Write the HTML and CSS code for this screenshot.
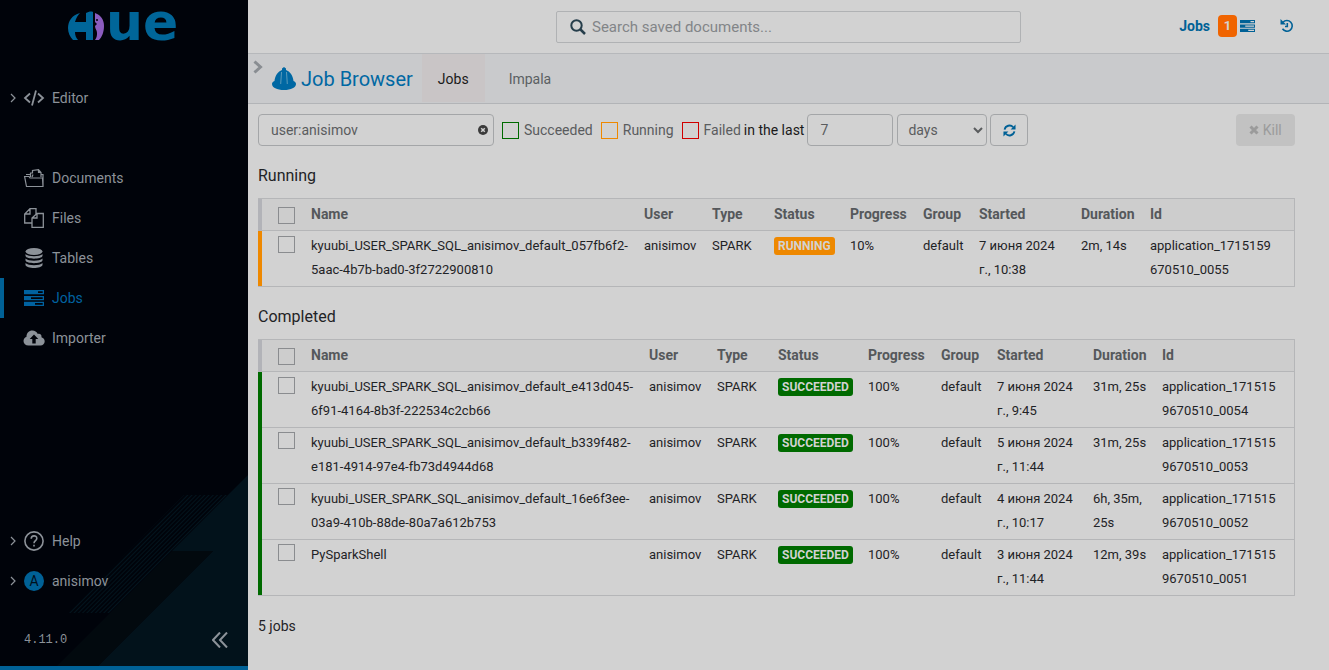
FILE: index.html
```html
<!DOCTYPE html>
<html lang="en">

<head>
    <meta charset="UTF-8">
    <meta name="viewport" content="width=device-width, initial-scale=1.0">
    <title>Hue - Job Browser</title>
    <link rel="stylesheet" href="styles.css">
</head>

<body>
    <!-- shared icons -->
    <svg class="defs" width="0" height="0">
        <symbol id="i-chevron" viewBox="0 0 8 10"><path d="M2 1l4 4-4 4" fill="none" stroke="currentColor" stroke-width="1.2"/></symbol>
        <symbol id="i-jobs" viewBox="0 0 20 16">
            <path fill="currentColor" fill-rule="evenodd" d="M0 0h20v4.300H0zM14 1.300v1.700h4.700V1.300zM0 5.900h20v4.300H0zM7 7.200v1.700h11.700V7.200zM0 11.700h20V16H0zM11 13v1.700h7.700V13z"/>
        </symbol>
    </svg>

    <aside class="sidebar">
        <svg class="sidebar-bg" viewBox="0 0 248 196" width="248" height="196">
            <defs>
                <pattern id="stripes" width="3" height="3" patternUnits="userSpaceOnUse" patternTransform="rotate(45)">
                    <rect width="1" height="3" fill="#03141d"/>
                </pattern>
            </defs>
            <path d="M248 5L172 81h41L98 196h150z" fill="#02121b"/>
            <path d="M172 81h41L98 196H57z" fill="#02090e"/>
            <path d="M184 25h44L110 143H67z" fill="url(#stripes)"/>
        </svg>

        <a class="logo" href="#">
            <svg viewBox="0 0 38 30" width="38" height="30">
                <path fill="#006699" d="M12 2C4 4 0 10 0 17c0 5 2 9 5 12h5c-2-2-3-5-3-8h11v8h7V1c-2-1-5 0-7 1v9H7c1-4 3-7 5-9z"/>
                <path fill="#8b5cbf" d="M27 2c6 2 9 7 9 13 0 6-2 11-5 14h-4c2-3 2-5 2-7 0-3-2-4-2-7l2-2-2-2z"/>
                <circle cx="29" cy="9" r="1" fill="#00030a"/>
            </svg>
            <span>ue</span>
        </a>

        <nav class="menu">
            <a class="item editor" href="#">
                <svg class="chevron"><use href="#i-chevron"/></svg>
                <svg class="icon" viewBox="0 0 20 20"><path d="M6 5.500L1 10l5 4.500M14 5.500l5 4.500-5 4.500M12 2.500L8 17.500" fill="none" stroke="currentColor" stroke-width="1.800"/></svg>
                Editor
            </a>
            <a class="item" href="#">
                <svg class="icon" viewBox="0 0 20 20"><path d="M2.500 18.500L.6 8.500h4.400l1 1.500h12.500l.5 8.500zM19 18.500V6.500h-2M6.500 9V5h2V2.500l6-.8L17 4.500V9M9 6.500L8 9M14.500 1.700v2.800H17M2 6.500h4.500" fill="none" stroke="currentColor" stroke-width="1.200"/></svg>
                Documents
            </a>
            <a class="item" href="#">
                <svg class="icon" viewBox="0 0 20 20"><path d="M7.500 15H.7V6L6 .7h6V6M6 .7V6H.7M8 19.300V10l5-4.500h6.300v13.800zM13 5.500V10H8" fill="none" stroke="currentColor" stroke-width="1.300"/></svg>
                Files
            </a>
            <a class="item" href="#">
                <svg class="icon" viewBox="0 0 20 20"><g fill="currentColor"><ellipse cx="10" cy="3.500" rx="8.500" ry="3.500"/><path d="M1.500 6c3 3 14 3 17 0v2c-1 3.500-16 3.500-17 0zM1.500 10.500c3 3 14 3 17 0v2c-1 3.500-16 3.500-17 0zM1.500 15c3 3 14 3 17 0v2c-1 4-16 4-17 0z"/></g></svg>
                Tables
            </a>
            <a class="item active" href="#">
                <svg class="icon" viewBox="0 0 20 16"><use href="#i-jobs"/></svg>
                Jobs
            </a>
            <a class="item" href="#">
                <svg class="icon" viewBox="0 0 20 20"><path fill="currentColor" fill-rule="evenodd" d="M4.500 17.500C1.500 17.500-.5 15.500-.5 13c0-2 1-3.500 3-4.300C2.500 5 5 2.500 8.300 2.500c2.500 0 4.500 1.300 5.500 3.500 2-.8 4.200.8 3.700 3.200 2 .6 3.200 2.200 3.200 4.100 0 2.400-1.900 4.200-4.200 4.200zM10 6.500L5.700 11h2.600v4.500h3.400V11h2.600z"/></svg>
                Importer
            </a>
        </nav>

        <div class="menu-bottom">
            <a class="item" href="#">
                <svg class="chevron"><use href="#i-chevron"/></svg>
                <svg class="icon" viewBox="0 0 20 20"><circle cx="10" cy="10" r="9.100" fill="none" stroke="currentColor" stroke-width="1.600"/><path d="M7.200 7.800c0-3.800 5.600-3.800 5.600-.4 0 2-2.800 2.400-2.800 4.800M10 13.700v1.800" fill="none" stroke="currentColor" stroke-width="1.600"/></svg>
                Help
            </a>
            <a class="item" href="#">
                <svg class="chevron"><use href="#i-chevron"/></svg>
                <span class="avatar">A</span>
                anisimov
            </a>
        </div>
        <div class="sidebar-footer">
            <span>4.11.0</span>
            <button type="button" aria-label="Collapse">
                <svg viewBox="0 0 16 16" width="16" height="16"><path d="M8 .5L1 8l7 7.500M15 .5L8 8l7 7.500" fill="none" stroke="currentColor" stroke-width="2"/></svg>
            </button>
        </div>
    </aside>

    <div class="page">
        <header class="topbar">
            <label class="search">
                <svg viewBox="0 0 16 16" width="16" height="16"><circle cx="6.500" cy="6.500" r="5.200" fill="none" stroke="currentColor" stroke-width="2"/><path d="M10.500 10.500l4.500 4.500" stroke="currentColor" stroke-width="2.500"/></svg>
                <input type="text" placeholder="Search saved documents..." aria-label="Search saved documents">
            </label>
            <div class="top-links">
                <a href="#">Jobs <span class="count">1</span><svg viewBox="0 0 20 16" width="15" height="12"><use href="#i-jobs"/></svg></a>
                <a class="history" href="#" aria-label="History"><svg viewBox="0 0 14 14" width="14" height="14"><path d="M3 3.300a5.300 5.300 0 1 1-.5 6.500M7.300 4v3.500H5" fill="none" stroke="currentColor" stroke-width="1.600"/><path d="M.5 0v5.500H6z" fill="currentColor"/></svg></a>
            </div>
        </header>

        <div class="titlebar">
            <button class="expand" type="button" aria-label="Show assist"><svg viewBox="0 0 10 14" width="10" height="14"><path d="M1.500 1.500L7.500 7l-6 5.500" fill="none" stroke="currentColor" stroke-width="3"/></svg></button>
            <h1>
                <svg viewBox="0 0 24 24" width="24" height="24"><path fill="currentColor" d="M10 1.500l2-1.500 2 1.500V3c4 1.500 7 5.500 7.500 11 1.500.5 2.500 1.500 2.500 3 0 3.500-5 6-12 6S0 20.500 0 17c0-1.500 1-2.500 2.500-3C3 8.500 6 4.500 10 3z"/><path d="M9.500 5l-.8 12M14.500 5l.8 12" stroke="#5b9bbb" stroke-width="1" fill="none"/></svg>
                Job Browser
            </h1>
            <nav class="tabs">
                <a class="current" href="#">Jobs</a>
                <a href="#">Impala</a>
            </nav>
        </div>

        <main>
            <form class="filters">
                <div class="query">
                    <input type="text" value="user:anisimov" aria-label="Filter">
                    <button type="button" aria-label="Clear"><svg viewBox="0 0 10 10" width="10" height="10"><circle cx="5" cy="5" r="5" fill="currentColor"/><path d="M3.200 3.200l3.600 3.600M6.800 3.200L3.200 6.800" stroke="#d2d2d2" stroke-width="1.500"/></svg></button>
                </div>
                <label><input class="green" type="checkbox">Succeeded</label>
                <label><input class="orange" type="checkbox">Running</label>
                <label><input class="red" type="checkbox">Failed</label>
                <label class="last" for="amount">in the last</label>
                <input class="amount" id="amount" type="text" value="7">
                <select aria-label="Time unit">
                    <option>days</option>
                    <option>hours</option>
                    <option>minutes</option>
                </select>
                <button class="refresh" type="button" aria-label="Refresh"><svg viewBox="0 0 14 14" width="13" height="13"><path d="M1.700 6A5.400 5.400 0 0 1 11 3.500M12.300 8A5.400 5.400 0 0 1 3 10.500" fill="none" stroke="currentColor" stroke-width="2"/><path d="M13.500.5v5.300H8.200zM.5 13.500V8.200h5.300z" fill="currentColor"/></svg></button>
                <button class="kill" type="button" disabled><svg viewBox="0 0 10 10" width="10" height="10"><path d="M1.500 1.500l7 7M8.500 1.500l-7 7" stroke="currentColor" stroke-width="3"/></svg> Kill</button>
            </form>

            <h2>Running</h2>
            <table class="running">
                <colgroup>
                    <col class="c-check"><col><col class="c-user"><col class="c-type"><col class="c-status"><col class="c-progress"><col class="c-group"><col class="c-started"><col class="c-duration"><col class="c-id">
                </colgroup>
                <thead>
                    <tr>
                        <th><input type="checkbox" aria-label="Select all running"></th>
                        <th>Name</th>
                        <th>User</th>
                        <th>Type</th>
                        <th>Status</th>
                        <th>Progress</th>
                        <th>Group</th>
                        <th>Started</th>
                        <th>Duration</th>
                        <th>Id</th>
                    </tr>
                </thead>
                <tbody>
                    <tr>
                        <td><input type="checkbox" aria-label="Select job"></td>
                        <td>kyuubi_USER_SPARK_SQL_anisimov_default_057fb6f2-5aac-4b7b-bad0-3f2722900810</td>
                        <td>anisimov</td>
                        <td>SPARK</td>
                        <td><span class="status">RUNNING</span></td>
                        <td>10%</td>
                        <td>default</td>
                        <td>7 июня 2024 г., 10:38</td>
                        <td>2m, 14s</td>
                        <td>application_1715159670510_0055</td>
                    </tr>
                </tbody>
            </table>

            <h2>Completed</h2>
            <table class="completed">
                <colgroup>
                    <col class="c-check"><col><col class="c-user"><col class="c-type"><col class="c-status"><col class="c-progress"><col class="c-group"><col class="c-started"><col class="c-duration"><col class="c-id">
                </colgroup>
                <thead>
                    <tr>
                        <th><input type="checkbox" aria-label="Select all completed"></th>
                        <th>Name</th>
                        <th>User</th>
                        <th>Type</th>
                        <th>Status</th>
                        <th>Progress</th>
                        <th>Group</th>
                        <th>Started</th>
                        <th>Duration</th>
                        <th>Id</th>
                    </tr>
                </thead>
                <tbody>
                    <tr>
                        <td><input type="checkbox" aria-label="Select job"></td>
                        <td>kyuubi_USER_SPARK_SQL_anisimov_default_e413d045-6f91-4164-8b3f-222534c2cb66</td>
                        <td>anisimov</td>
                        <td>SPARK</td>
                        <td><span class="status">SUCCEEDED</span></td>
                        <td>100%</td>
                        <td>default</td>
                        <td>7 июня 2024 г., 9:45</td>
                        <td>31m, 25s</td>
                        <td>application_1715159670510_0054</td>
                    </tr>
                    <tr>
                        <td><input type="checkbox" aria-label="Select job"></td>
                        <td>kyuubi_USER_SPARK_SQL_anisimov_default_b339f482-e181-4914-97e4-fb73d4944d68</td>
                        <td>anisimov</td>
                        <td>SPARK</td>
                        <td><span class="status">SUCCEEDED</span></td>
                        <td>100%</td>
                        <td>default</td>
                        <td>5 июня 2024 г., 11:44</td>
                        <td>31m, 25s</td>
                        <td>application_1715159670510_0053</td>
                    </tr>
                    <tr>
                        <td><input type="checkbox" aria-label="Select job"></td>
                        <td>kyuubi_USER_SPARK_SQL_anisimov_default_16e6f3ee-03a9-410b-88de-80a7a612b753</td>
                        <td>anisimov</td>
                        <td>SPARK</td>
                        <td><span class="status">SUCCEEDED</span></td>
                        <td>100%</td>
                        <td>default</td>
                        <td>4 июня 2024 г., 10:17</td>
                        <td>6h, 35m, 25s</td>
                        <td>application_1715159670510_0052</td>
                    </tr>
                    <tr>
                        <td><input type="checkbox" aria-label="Select job"></td>
                        <td>PySparkShell</td>
                        <td>anisimov</td>
                        <td>SPARK</td>
                        <td><span class="status">SUCCEEDED</span></td>
                        <td>100%</td>
                        <td>default</td>
                        <td>3 июня 2024 г., 11:44</td>
                        <td>12m, 39s</td>
                        <td>application_1715159670510_0051</td>
                    </tr>
                </tbody>
            </table>
            <p class="total">5 jobs</p>
        </main>
    </div>
</body>

</html>
```
FILE: styles.css
```css
* {
    box-sizing: border-box;
}

body {
    margin: 0;
    display: flex;
    min-height: 100vh;
    background: #d2d2d2;
    color: #1f2326;
    font-family: Roboto, "Liberation Sans", sans-serif;
    font-size: 14px;
    line-height: 20px;
}

a {
    text-decoration: none;
}

button,
input,
select {
    font: inherit;
    color: inherit;
    margin: 0;
}

svg {
    flex-shrink: 0;
}

.defs {
    position: absolute;
}

/* sidebar */
.sidebar {
    position: relative;
    display: flex;
    flex-direction: column;
    flex: 0 0 248px;
    background: #00030a;
    border-bottom: 4px solid #006196;
    color: #8c9299;
}

.sidebar-bg {
    position: absolute;
    left: 0;
    bottom: 0;
}

.logo {
    display: flex;
    align-items: flex-start;
    height: 78px;
    padding-left: 68px;
    color: #006699;
    font: bold 52px/60px "DejaVu Sans", sans-serif;
}

.logo svg {
    margin-top: 11px;
}

.logo span {
    margin-top: -8px;
}

.menu {
    flex: 1;
}

.item {
    position: relative;
    display: flex;
    align-items: center;
    justify-content: flex-start;
    height: 40px;
    padding-left: 24px;
    gap: 8px;
    color: inherit;
}

.editor {
    margin-bottom: 40px;
}

.chevron {
    position: absolute;
    left: 9px;
    width: 8px;
    height: 10px;
}

.icon {
    width: 20px;
    height: 20px;
    overflow: visible;
}

.active {
    color: #0062a0;
}

.active::before {
    content: "";
    position: absolute;
    left: 0;
    top: 0;
    width: 4px;
    height: 40px;
    background: #006196;
}

.avatar {
    width: 20px;
    border-radius: 50%;
    background: #006196;
    color: #00101c;
    text-align: center;
}

.sidebar-footer {
    position: relative;
    display: flex;
    align-items: center;
    justify-content: space-between;
    height: 65px;
    padding: 12px 20px 0 24px;
    font-family: "Liberation Mono", monospace;
    font-size: 12px;
}

.sidebar-footer button {
    display: flex;
    padding: 0;
    border: 0;
    background: none;
}

/* top */
.page {
    flex: 1;
    min-width: 0;
}

.topbar {
    display: grid;
    grid-template-columns: 1fr 465px 1fr;
    align-items: center;
    height: 54px;
    border-bottom: 1px solid #b6b8bb;
}

.search {
    grid-column: 2;
    display: flex;
    align-items: center;
    gap: 6px;
    height: 32px;
    padding-left: 13px;
    border: 1px solid #b0b2b4;
    border-radius: 2px;
    color: #263e4b;
}

.search input {
    flex: 1;
    padding: 0;
    border: 0;
    background: none;
    font-size: 15px;
    outline: none;
}

.search input::placeholder {
    color: #828588;
}

.top-links,
.top-links a {
    display: flex;
    align-items: center;
    justify-content: flex-end;
    color: #006196;
    font-weight: bold;
}

.top-links {
    gap: 25px;
    padding: 0 35px 2px 0;
}

.count {
    width: 19px;
    margin: 0 3px 0 8px;
    border-radius: 4px;
    background: #f06400;
    color: #d2d2d2;
    font-size: 13px;
    line-height: 22px;
    text-align: center;
}

.titlebar {
    display: flex;
    height: 50px;
    background: #c9cacc;
    border-bottom: 1px solid #b2b4b7;
}

.expand {
    align-self: flex-start;
    width: 24px;
    padding: 5px 0 0 5px;
    border: 0;
    background: none;
    color: #898d92;
    text-align: left;
}

h1 {
    display: flex;
    align-items: center;
    gap: 5px;
    margin: 0 9px 0 0;
    color: #0068a3;
    font-size: 20px;
    font-weight: normal;
}

.tabs {
    display: flex;
    gap: 8px;
}

.tabs a {
    padding: 0 16px;
    color: #5b5f63;
    line-height: 50px;
}

.tabs .current {
    height: 48px;
    background: #c9c5c6;
    color: #1a1a1a;
}

/* filters */
main {
    padding: 10px 34px 10px 10px;
}

.filters {
    display: flex;
    align-items: center;
    margin-bottom: 20px;
    color: #5a5c5e;
}

.query {
    display: flex;
    align-items: center;
    width: 236px;
    margin-right: 8px;
    padding-right: 5px;
}

.query,
.amount,
.filters select,
.refresh {
    height: 32px;
    border: 1px solid #a4a6a8;
    border-radius: 4px;
    background: none;
}

.query input {
    flex: 1;
    min-width: 0;
    padding: 0 12px;
    border: 0;
    background: none;
}

.query button {
    display: flex;
    padding: 0;
    border: 0;
    background: none;
    color: #3b3b3b;
}

input[type="checkbox"] {
    appearance: none;
    display: block;
    width: 17px;
    height: 17px;
    border: 1px solid #8a8c8f;
}

.filters label {
    display: flex;
    align-items: center;
    gap: 5px;
    margin-right: 8px;
}

.filters .green {
    border-color: #006a00;
}

.filters .orange {
    border-color: #ee8800;
}

.filters .red {
    border-color: #d00000;
}

.filters .last {
    margin: 0 3px 0 -5px;
    color: #1a1a1a;
}

.amount {
    width: 86px;
    margin-right: 4px;
    padding: 0 12px;
}

.filters select {
    width: 90px;
    margin-right: 3px;
    padding: 0 6px;
}

.refresh {
    display: flex;
    align-items: center;
    justify-content: center;
    width: 38px;
    padding: 0;
    color: #006196;
}

.kill {
    width: 59px;
    height: 32px;
    margin-left: auto;
    padding: 0;
    border: 0;
    border-radius: 4px;
    background: #c2c2c2;
    color: #9b9b9b;
}

/* jobs */
h2 {
    margin: 0 0 12px;
    font-size: 16px;
    font-weight: normal;
    line-height: 20px;
}

table {
    width: 100%;
    margin-bottom: 20px;
    border: 1px solid #b5b6b8;
    border-left: 0;
    border-spacing: 0;
    table-layout: fixed;
    font-size: 13px;
    line-height: 24px;
}

th,
td {
    padding: 3px 4px 4px 8px;
    text-align: left;
    vertical-align: top;
}

th {
    border-bottom: 1px solid #b5b6b8;
    background: #cdcdcd;
    color: #55585b;
    font-size: 14px;
}

/* row lines stop at the colour bar */
tr + tr td {
    padding-top: 4px;
    box-shadow: inset 0 1px #b5b6b8;
}

th:first-child,
td:first-child {
    padding: 5px 0 0 16px;
    border-left: 4px solid #b2b3b8;
}

th:first-child {
    padding-top: 8px;
}

.running td:first-child {
    border-left-color: #ee8800;
}

.completed td:first-child {
    border-left-color: #006a00;
}

th:last-child,
td:last-child {
    padding-right: 18px;
    word-break: break-all;
}

.status {
    display: block;
    width: max-content;
    margin-top: 3px;
    padding: 0 4px;
    border-radius: 3px;
    background: #ee8800;
    color: #d2d2d2;
    font-size: 12px;
    font-weight: bold;
    line-height: 18px;
}

.completed .status {
    background: #006a00;
}

.c-check {
    width: 45px;
}

.c-user {
    width: 68px;
}

.c-type {
    width: 62px;
}

.completed .c-type {
    width: 61px;
}

.c-status {
    width: 76px;
}

.completed .c-status {
    width: 90px;
}

.c-progress {
    width: 73px;
}

.c-group {
    width: 56px;
}

.c-started {
    width: 102px;
}

.completed .c-started {
    width: 96px;
}

.c-duration {
    width: 69px;
}

.c-id {
    width: 152px;
}

.completed .c-id {
    width: 140px;
}

.total {
    margin: 0;
}
```
